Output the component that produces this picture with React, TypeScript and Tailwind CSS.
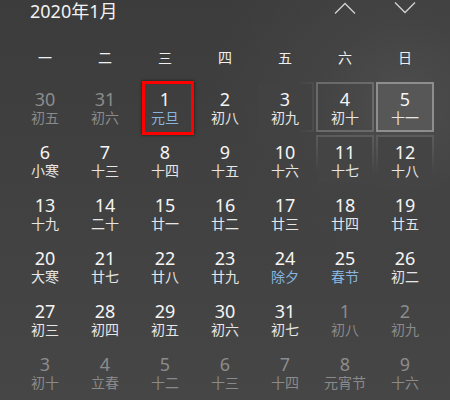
type Day = { n: number; l: string; dim?: boolean; blue?: boolean };

const weekdays = ["一", "二", "三", "四", "五", "六", "日"];

const days: Day[] = [
  { n: 30, l: "初五", dim: true },
  { n: 31, l: "初六", dim: true },
  { n: 1, l: "元旦", blue: true },
  { n: 2, l: "初八" },
  { n: 3, l: "初九" },
  { n: 4, l: "初十" },
  { n: 5, l: "十一" },
  { n: 6, l: "小寒" },
  { n: 7, l: "十三" },
  { n: 8, l: "十四" },
  { n: 9, l: "十五" },
  { n: 10, l: "十六" },
  { n: 11, l: "十七" },
  { n: 12, l: "十八" },
  { n: 13, l: "十九" },
  { n: 14, l: "二十" },
  { n: 15, l: "廿一" },
  { n: 16, l: "廿二" },
  { n: 17, l: "廿三" },
  { n: 18, l: "廿四" },
  { n: 19, l: "廿五" },
  { n: 20, l: "大寒" },
  { n: 21, l: "廿七" },
  { n: 22, l: "廿八" },
  { n: 23, l: "廿九" },
  { n: 24, l: "除夕", blue: true },
  { n: 25, l: "春节", blue: true },
  { n: 26, l: "初二" },
  { n: 27, l: "初三" },
  { n: 28, l: "初四" },
  { n: 29, l: "初五" },
  { n: 30, l: "初六" },
  { n: 31, l: "初七" },
  { n: 1, l: "初八", dim: true },
  { n: 2, l: "初九", dim: true },
  { n: 3, l: "初十", dim: true },
  { n: 4, l: "立春", dim: true },
  { n: 5, l: "十二", dim: true },
  { n: 6, l: "十三", dim: true },
  { n: 7, l: "十四", dim: true },
  { n: 8, l: "元宵节", dim: true },
  { n: 9, l: "十六", dim: true },
];

// reveal-light borders around the hovered cell (5)
const revealClass = (i: number) => {
  if (i === 6) return "border-2 border-[#8e8e8e] bg-[#575757]";
  if (i === 5) return "border-2 border-[#6a6a6a]";
  if (i === 4)
    return "border-2 border-transparent [background:linear-gradient(#424242,#424242)_padding-box,linear-gradient(to_left,#4d4d4d,transparent_30%)_border-box]";
  if (i === 12 || i === 13)
    return "border-2 border-transparent [background:linear-gradient(#444444,#444444)_padding-box,linear-gradient(to_bottom,#5c5c5c,transparent_75%)_border-box]";
  return "";
};

function Chevron({ up }: { up?: boolean }) {
  return (
    <svg width="22" height="12" viewBox="0 0 22 12" className="text-[#d2d2d2]">
      <path
        d={up ? "M1 11.5 L11 1.5 L21 11.5" : "M1 0.5 L11 10.5 L21 0.5"}
        fill="none"
        stroke="currentColor"
        strokeWidth="1.3"
      />
    </svg>
  );
}

export default function App() {
  return (
    <div
      className="w-[450px] h-[400px] overflow-hidden text-white bg-[radial-gradient(circle_at_405px_107px,#4e4e4e_0,#434343_90px,transparent_200px),linear-gradient(to_bottom,#3c3c3c,#464646)] bg-[#404040]"
      style={{ fontFamily: '"Noto Sans", "Noto Sans CJK SC", sans-serif' }}
    >
      <div className="flex items-start h-[40px]">
        <div className="pl-[30px] text-[18px] leading-[22px] text-[#f2f2f2]">2020年1月</div>
        <div className="ml-auto flex pt-[2px] pr-[34px] gap-[38px]">
          <Chevron up />
          <Chevron />
        </div>
      </div>

      <div className="grid grid-cols-[repeat(7,58px)] gap-x-[2px] pl-[16px]">
        {weekdays.map((w) => (
          <div key={w} className="h-[34px] flex items-center justify-center text-[14px] text-[#f0f0f0]">
            {w}
          </div>
        ))}
      </div>

      <div className="grid grid-cols-[repeat(7,58px)] auto-rows-[50px] gap-x-[2px] gap-y-[3px] pl-[16px] pt-[8px]">
        {days.map((d, i) => (
          <div
            key={i}
            className={`relative flex flex-col items-center justify-center ${revealClass(i)}`}
          >
            <div
              className={`text-[18px] leading-[20px] ${d.dim ? "text-[#8c8c8c]" : "text-[#f5f5f5]"}`}
            >
              {d.n}
            </div>
            <div
              className={`text-[14px] leading-[17px] ${
                d.dim ? "text-[#8a8a8a]" : d.blue ? "text-[#86b6e0]" : "text-[#e6e6e6]"
              }`}
            >
              {d.l}
            </div>
            {i === 2 && (
              <div className="absolute left-[6px] right-0 top-[-1px] bottom-[-3px] border-[3px] border-[#ff0000] shadow-[0_0_3px_rgba(0,0,0,0.6)]" />
            )}
          </div>
        ))}
      </div>
    </div>
  );
}
